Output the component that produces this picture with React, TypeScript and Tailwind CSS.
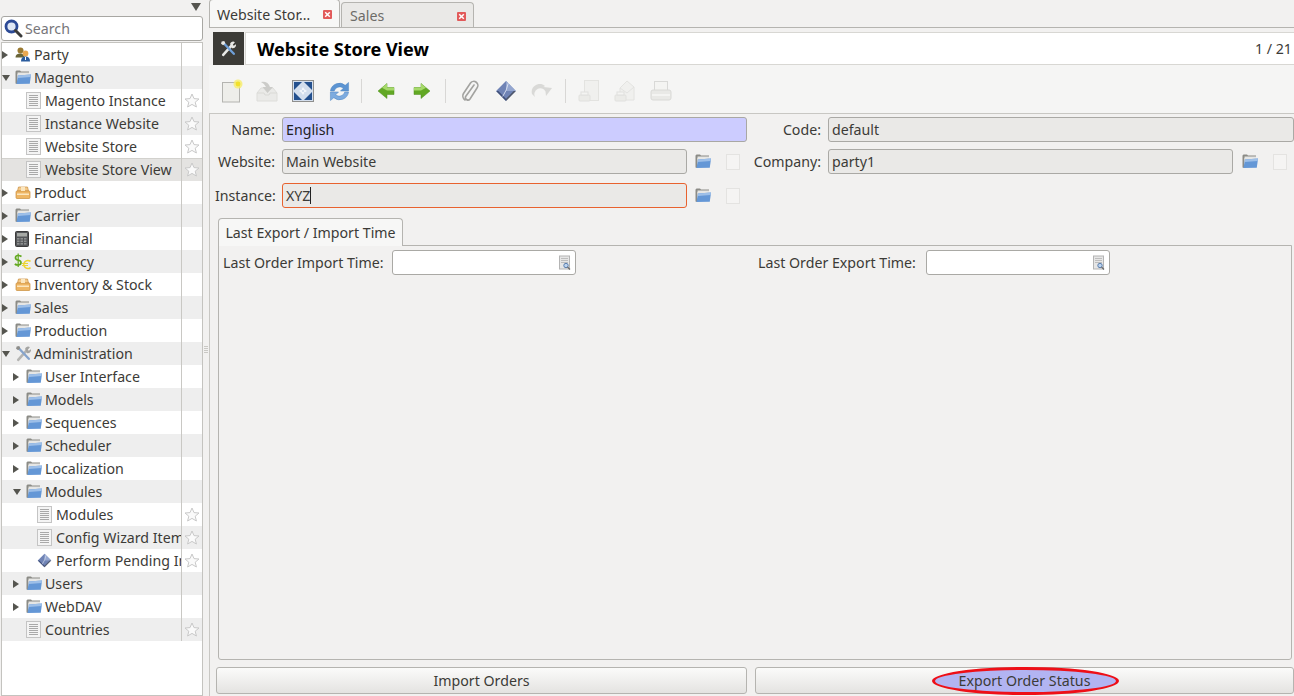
import React from "react";

const Folder = () => (
  <svg width="16" height="15" viewBox="0 0 16 15" className="shrink-0">
    <path d="M0.5 1.5 L0.5 13.5 L2 14 L2.5 4 L14 4 L14 1.5 L6 1.5 L5 0.5 L1.5 0.5 Z" fill="#8b8b86" />
    <rect x="2.5" y="2.5" width="11.5" height="3" fill="#e6e6e4" />
    <path d="M3 5.5 L16 4.5 L14.8 13.8 L1.5 14 Z" fill="#6497d6" />
    <path d="M3 5.5 L16 4.5 L15.7 7 L2.7 8 Z" fill="#9dbfe8" />
  </svg>
);

const Doc = () => (
  <svg width="15" height="17" viewBox="0 0 15 17">
    <rect x="0.5" y="0.5" width="14" height="16" fill="#f4f4f4" stroke="#c4c4c4" />
    {[3.5, 5.5, 7.5, 9.5, 11.5, 13.5].map((y) => (
      <line key={y} x1="3" x2="12" y1={y} y2={y} stroke="#a9a9a9" />
    ))}
  </svg>
);

const Star = () => (
  <svg width="16" height="15" viewBox="0 0 16 15">
    <path d="M8 1 L10 5.6 L15 6 L11.2 9.2 L12.4 14 L8 11.4 L3.6 14 L4.8 9.2 L1 6 L6 5.6 Z" fill="#fafafa" stroke="#c9c9c9" />
  </svg>
);

const Diamond = ({ size = 15 }: { size?: number }) => (
  <svg width={size} height={size} viewBox="0 0 20 20">
    <path d="M10 1 L19 10 L10 19 L1 10 Z" fill="#6f83b5" />
    <path d="M10 1 L19 10 L10 10 Z" fill="#94a6cf" />
    <path d="M1 10 L10 19 L10 17 L3 10 Z" fill="#3f4f78" />
    <path d="M10 19 L19 10 L17 10 L10 17 Z" fill="#3a3a3a" opacity="0.6" />
    <path d="M12 3 Q11 9 7 15" stroke="#dfe6f4" strokeWidth="0.8" fill="none" />
  </svg>
);

const HeaderTools = () => (
  <svg width="17" height="17" viewBox="0 0 16 16">
    <path d="M3 14 L11 5" stroke="#e8e8e6" strokeWidth="2.4" strokeLinecap="round" />
    <path d="M9.5 3.5 A3 3 0 0 1 14 2 L12 4.5 L13 5.5 L15 4 A3 3 0 0 1 11 7.5 Z" fill="#e8e8e6" />
    <path d="M4 3.5 L13 13" stroke="#6f9fd8" strokeWidth="2.2" strokeLinecap="round" />
    <path d="M1.5 1.5 L4 1 L5 3 L3 5 L1 3.5 Z" fill="#e8e8e6" />
  </svg>
);

const AdminTools = () => (
  <svg width="17" height="17" viewBox="0 0 16 16">
    <path d="M3 14 L11 5" stroke="#b4b4b2" strokeWidth="2.4" strokeLinecap="round" />
    <path d="M9.5 3.5 A3 3 0 0 1 14 2 L12 4.5 L13 5.5 L15 4 A3 3 0 0 1 11 7.5 Z" fill="#a4a4a2" />
    <path d="M4 3.5 L13 13" stroke="#86a4cc" strokeWidth="2.2" strokeLinecap="round" />
    <path d="M1.5 1.5 L4 1 L5 3 L3 5 L1 3.5 Z" fill="#8d8d8a" />
  </svg>
);

const Party = () => (
  <svg width="16" height="15" viewBox="0 0 16 15">
    <circle cx="5.5" cy="3.5" r="3" fill="#9a7a32" />
    <path d="M0.5 10.5 Q0.5 6.5 5.5 6.5 Q9 6.5 9.5 10.5 Z" fill="#6a6538" />
    <circle cx="10.5" cy="6.5" r="2.9" fill="#eaa850" />
    <path d="M6 14.5 Q6 9.5 10.5 9.5 Q15 9.5 15 14.5 Z" fill="#2a5c9e" />
    <rect x="10" y="10" width="1" height="3" fill="#fff" />
  </svg>
);

const Box = () => (
  <svg width="16" height="13" viewBox="0 0 16 13">
    <path d="M2.5 5 L3.5 1 L12.5 1 L13.5 5 Z" fill="#f4c98a" stroke="#c98e3e" strokeWidth="0.7" />
    <rect x="1" y="5" width="14" height="7.5" rx="1" fill="#eeb664" stroke="#c98e3e" strokeWidth="0.7" />
    <rect x="6" y="1" width="4" height="4" fill="#fbe6bf" />
    <rect x="2" y="7.5" width="12" height="1.5" fill="#fbe6bf" />
  </svg>
);

const Calc = () => (
  <svg width="14" height="16" viewBox="0 0 14 16">
    <rect x="0.5" y="0.5" width="13" height="15" rx="1" fill="#55575a" stroke="#3c3c3c" />
    <rect x="2" y="2" width="10" height="3.5" fill="#a7aaa6" />
    {[7, 9.5, 12].map((y) =>
      [2, 5.5, 9].map((x) => <rect key={`${x}-${y}`} x={x} y={y} width="2.5" height="1.6" fill="#8e9090" />),
    )}
  </svg>
);

const Currency = () => (
  <svg width="17" height="17" viewBox="0 0 17 17" className="ml-[-1px]">
    <path d="M7.5 3.5 Q6 2.5 4 2.5 Q1.5 2.5 1.5 4.7 Q1.5 6.5 4 7 Q7 7.7 7 9.8 Q7 12 4 12 Q2 12 0.8 11" fill="none" stroke="#62a81e" strokeWidth="1.7" />
    <path d="M4.2 0.5 L4.2 14" stroke="#62a81e" strokeWidth="1.2" />
    <path d="M16.5 8.5 A4 4 0 1 0 16.5 14.5" fill="none" stroke="#ecd530" strokeWidth="1.6" />
    <path d="M8 10.5 L14 10.5 M8 12.5 L14 12.5" stroke="#ecd530" strokeWidth="1.1" />
  </svg>
);

const Search = () => (
  <svg width="19" height="19" viewBox="0 0 19 19">
    <circle cx="7.5" cy="7.5" r="5.5" fill="#dfe7f5" stroke="#2c4a96" strokeWidth="2.8" />
    <path d="M11.5 11.5 L17 17" stroke="#3b3b3b" strokeWidth="3" strokeLinecap="round" />
  </svg>
);

const CalPick = () => (
  <svg width="14" height="16" viewBox="0 0 14 16">
    <rect x="1.5" y="1" width="10" height="13" fill="#e6e6e6" stroke="#b4b4b4" />
    {[3.5, 5.5, 7.5].map((y) => (
      <line key={y} x1="3" x2="10" y1={y} y2={y} stroke="#bdbdbd" />
    ))}
    <circle cx="8" cy="10.5" r="2.2" fill="#bcd3ee" stroke="#5b7fae" />
    <path d="M9.5 12 L12 14.5" stroke="#6b6b6b" strokeWidth="1.3" />
  </svg>
);

const Arrow = ({ dir }: { dir: "left" | "right" }) => (
  <svg width="18" height="16" viewBox="0 0 18 16">
    <g transform={dir === "right" ? "" : "translate(18 0) scale(-1 1)"}>
      <path d="M1 4.5 L8 4.5 L8 0.5 L17 8 L8 15.5 L8 11.5 L1 11.5 Z" fill="#62a824" stroke="#4f8f1c" strokeWidth="0.5" />
      <path d="M1 4.5 L8 4.5 L8 0.5 L13 4.7 L8 7.5 L1 7.5 Z" fill="#a6d96a" />
    </g>
  </svg>
);

const Icons: Record<string, React.ReactNode> = {
  new: (
    <svg width="24" height="24" viewBox="0 0 24 24">
      <rect x="3.5" y="3.5" width="17" height="19.5" fill="#eeeeea" stroke="#b4b4b0" />
      <circle cx="19" cy="5" r="4.5" fill="#f7ee6a" opacity="0.8" />
      <circle cx="19" cy="5" r="2.4" fill="#f2e02a" />
    </svg>
  ),
  save: (
    <svg width="24" height="22" viewBox="0 0 24 22" opacity="0.7">
      <path d="M2 13 L6 8 L18 8 L22 13 L22 21 L2 21 Z" fill="#e6e6e3" stroke="#d4d4d0" />
      <path d="M2 13 L9 13 L10 15 L14 15 L15 13 L22 13" fill="none" stroke="#cfcfcb" />
      <path d="M6 2 Q13 1 15 7 L18 7 L12.5 13 L7.5 7 L11 7 Q10 4 6 2 Z" fill="#bcbcb8" />
    </svg>
  ),
  full: (
    <svg width="22" height="22" viewBox="0 0 22 22">
      <rect x="0.5" y="0.5" width="21" height="21" fill="#d3deed" stroke="#8f8f8d" />
      <path d="M2 2 L10 2 L2 10 Z" fill="#23508e" />
      <path d="M20 2 L12 2 L20 10 Z" fill="#23508e" />
      <path d="M2 20 L10 20 L2 12 Z" fill="#23508e" />
      <path d="M20 20 L12 20 L20 12 Z" fill="#23508e" />
      <path d="M11 7 L9 10 L13 10 Z M11 15 L9 12 L13 12 Z M7 11 L10 9 L10 13 Z M15 11 L12 9 L12 13 Z" fill="#f4f7fb" />
    </svg>
  ),
  reload: (
    <svg width="21" height="21" viewBox="0 0 22 22">
      <path d="M1.5 10.5 A9.5 9.5 0 0 1 17 4.5 L20.5 1.5 L20.5 10.5 L12 10.5 L15 7.5 A6 6 0 0 0 5.5 10.5 Z" fill="#5c94d2" stroke="#4a82c0" strokeWidth="0.5" />
      <path d="M20.5 11.5 A9.5 9.5 0 0 1 5 17.5 L1.5 20.5 L1.5 11.5 L10 11.5 L7 14.5 A6 6 0 0 0 16.5 11.5 Z" fill="#7dabdf" stroke="#4a82c0" strokeWidth="0.5" />
    </svg>
  ),
  clip: (
    <svg width="20" height="22" viewBox="0 0 20 22">
      <path d="M14 5 L6 16 A2.4 2.4 0 0 0 10 19 L17 8 A4 4 0 0 0 10.5 3 L3.5 13.5 A5 5 0 0 0 5 20" fill="none" stroke="#a3a3a0" strokeWidth="1.6" strokeLinecap="round" />
    </svg>
  ),
  redo: (
    <svg width="22" height="18" viewBox="0 0 22 18" opacity="0.6">
      <path d="M1 12 A8 8 0 0 1 14 4 L12.5 5 L21 6 L15 14 L14.5 9.5 A5 5 0 0 0 4 15 Z" fill="#c8c8c4" />
    </svg>
  ),
  printDoc: (
    <svg width="22" height="24" viewBox="0 0 22 24" opacity="0.5">
      <rect x="6.5" y="1.5" width="14" height="20" fill="#ededea" stroke="#d2d2ce" />
      <rect x="1" y="16" width="11" height="6" rx="1" fill="#e2e2de" stroke="#cecec9" />
      <rect x="3" y="13" width="7" height="3" fill="#f4f4f2" stroke="#cecec9" />
    </svg>
  ),
  printMail: (
    <svg width="22" height="24" viewBox="0 0 22 24" opacity="0.5">
      <path d="M6 9 L13 2 L20 8 L20 21 L6 21 Z" fill="#ededea" stroke="#d2d2ce" />
      <path d="M6 9 L13 14 L20 8" fill="none" stroke="#d2d2ce" />
      <rect x="1" y="16" width="11" height="6" rx="1" fill="#e2e2de" stroke="#cecec9" />
      <rect x="3" y="13" width="7" height="3" fill="#f4f4f2" stroke="#cecec9" />
    </svg>
  ),
  print: (
    <svg width="22" height="22" viewBox="0 0 22 22" opacity="0.6">
      <rect x="4.5" y="1.5" width="13" height="9" fill="#f4f4f2" stroke="#c8c8c4" />
      <rect x="1" y="10" width="20" height="10" rx="2" fill="#e2e2de" stroke="#c8c8c4" />
      <rect x="2" y="14" width="18" height="2" fill="#f4f4f2" />
    </svg>
  ),
};

type Row = { label: string; indent: number; arrow?: "r" | "d"; icon: React.ReactNode; star?: boolean; selected?: boolean };

const rows: Row[] = [
  { label: "Party", indent: 0, arrow: "r", icon: <Party /> },
  { label: "Magento", indent: 0, arrow: "d", icon: <Folder /> },
  { label: "Magento Instance", indent: 1, icon: <Doc />, star: true },
  { label: "Instance Website", indent: 1, icon: <Doc />, star: true },
  { label: "Website Store", indent: 1, icon: <Doc />, star: true },
  { label: "Website Store View", indent: 1, icon: <Doc />, star: true, selected: true },
  { label: "Product", indent: 0, arrow: "r", icon: <Box /> },
  { label: "Carrier", indent: 0, arrow: "r", icon: <Folder /> },
  { label: "Financial", indent: 0, arrow: "r", icon: <Calc /> },
  { label: "Currency", indent: 0, arrow: "r", icon: <Currency /> },
  { label: "Inventory & Stock", indent: 0, arrow: "r", icon: <Box /> },
  { label: "Sales", indent: 0, arrow: "r", icon: <Folder /> },
  { label: "Production", indent: 0, arrow: "r", icon: <Folder /> },
  { label: "Administration", indent: 0, arrow: "d", icon: <AdminTools /> },
  { label: "User Interface", indent: 1, arrow: "r", icon: <Folder /> },
  { label: "Models", indent: 1, arrow: "r", icon: <Folder /> },
  { label: "Sequences", indent: 1, arrow: "r", icon: <Folder /> },
  { label: "Scheduler", indent: 1, arrow: "r", icon: <Folder /> },
  { label: "Localization", indent: 1, arrow: "r", icon: <Folder /> },
  { label: "Modules", indent: 1, arrow: "d", icon: <Folder /> },
  { label: "Modules", indent: 2, icon: <Doc />, star: true },
  { label: "Config Wizard Items", indent: 2, icon: <Doc />, star: true },
  { label: "Perform Pending Installation", indent: 2, icon: <Diamond />, star: true },
  { label: "Users", indent: 1, arrow: "r", icon: <Folder /> },
  { label: "WebDAV", indent: 1, arrow: "r", icon: <Folder /> },
  { label: "Countries", indent: 1, icon: <Doc />, star: true },
];

const TreeArrow = ({ dir }: { dir?: "r" | "d" }) =>
  dir === "r" ? (
    <span className="h-0 w-0 border-y-[4px] border-l-[6px] border-y-transparent border-l-[#55554f]" />
  ) : dir === "d" ? (
    <span className="h-0 w-0 border-x-[4px] border-t-[6px] border-x-transparent border-t-[#55554f]" />
  ) : null;

const Sep = ({ className }: { className: string }) => (
  <div className={`flex ${className}`}>
    <div className="h-[24px] w-px bg-[#d8d7d5]" />
  </div>
);

const Tool = ({ children }: { children: React.ReactNode }) => (
  <div className="flex h-[36px] w-[36px] items-center justify-center">{children}</div>
);

const Ghost = () => <div className="h-[16px] w-[14px] border border-[#e4e3e1] bg-[#f5f4f3]" />;

const Field = ({ value, className }: { value: string; className: string }) => (
  <div className={`flex h-[25px] items-center rounded-[3px] border px-[3px] ${className}`}>{value}</div>
);

const Label = ({ children, className }: { children: string; className: string }) => (
  <div className={`shrink-0 whitespace-nowrap text-right ${className}`}>{children}</div>
);

export default function App() {
  return (
    <div
      className="flex h-[696px] w-[1294px] overflow-hidden bg-[#f2f1f0] text-[14.2px] leading-[18px] text-[#3c3b37]"
      style={{ fontFamily: '"Noto Sans", "Open Sans", sans-serif' }}
    >
      <aside className="flex w-[203px] shrink-0 flex-col">
        <div className="flex h-[16px] items-center justify-end pr-[2px]">
          <span className="mt-[-2px] h-0 w-0 border-x-[5px] border-t-[8px] border-x-transparent border-t-[#55554f]" />
        </div>
        <div className="ml-[1px] flex h-[25px] items-center gap-[2px] rounded-[3px] border border-[#a8a7a3] bg-white pl-[2px]">
          <Search />
          <span className="text-[#77767a]">Search</span>
        </div>
        <div className="ml-[1px] mt-[1px] flex-1 overflow-hidden border border-[#c4c3bf] bg-white">
          {rows.map((r, i) => (
            <div
              key={`${r.label}${i}`}
              className={`flex h-[23px] items-center ${
                r.selected
                  ? "bg-[#e4e3e1] shadow-[inset_0_1px_0_#d2d1cd]"
                  : i % 2 === 1
                    ? "bg-[#eeeeee]"
                    : "bg-white"
              }`}
            >
              <div
                className={`flex h-full w-[179px] shrink-0 items-center overflow-hidden whitespace-nowrap ${
                  r.indent === 0 ? "pl-0" : r.indent === 1 ? "pl-[11px]" : "pl-[22px]"
                }`}
              >
                <div className="flex w-[11px] shrink-0 items-center justify-start">
                  <TreeArrow dir={r.arrow} />
                </div>
                <div className="flex w-[21px] shrink-0 items-center justify-start pl-[2px]">{r.icon}</div>
                <span>{r.label}</span>
              </div>
              <div className="flex h-full flex-1 items-center justify-center border-l border-[#c9c8c4]">
                {r.star && <Star />}
              </div>
            </div>
          ))}
        </div>
      </aside>

      <div className="flex w-[6px] shrink-0 flex-col items-center justify-center gap-px pt-[3px]">
        {[0, 1, 2, 3].map((n) => (
          <div key={n} className="h-px w-[4px] bg-[#c9c8c4]" />
        ))}
      </div>

      <main className="flex min-w-0 flex-1 flex-col">
        <div className="flex h-[28px] items-end gap-px border-b border-[#b5b4b0]">
          <div className="flex h-[28px] w-[131px] items-center justify-between rounded-t-[4px] border border-b-0 border-[#b5b4b0] bg-[#f7f7f6] pl-[7px] pr-[7px] pt-[2px]">
            <span className="whitespace-nowrap">Website Stor…</span>
            <CloseIcon />
          </div>
          <div className="flex h-[25px] w-[133px] items-center justify-between rounded-t-[4px] border border-b-0 border-[#b5b4b0] bg-[#eae9e7] pl-[8px] pr-[7px] pt-[2px] text-[#6d6c68]">
            <span>Sales</span>
            <CloseIcon />
          </div>
        </div>

        <div className="ml-[4px] mt-[4px] flex h-[33px] items-stretch">
          <div className="flex w-[31px] items-center justify-center bg-[#3c3b37]">
            <HeaderTools />
          </div>
          <div className="ml-px flex flex-1 items-center justify-between border-y border-l border-[#d8d7d3] bg-white pl-[11px] pr-[2px]">
            <span className="text-[18px] font-bold text-black">Website Store View</span>
            <span>1 / 21</span>
          </div>
        </div>

        <div className="flex h-[49px] items-center border-b border-[#c8c7c3] bg-[#f5f5f4] pl-[4px] pt-[4px]">
          <Tool>{Icons.new}</Tool>
          <Tool>{Icons.save}</Tool>
          <Tool>{Icons.full}</Tool>
          <Tool>{Icons.reload}</Tool>
          <Sep className="w-[11px] pl-[4px]" />
          <Tool><Arrow dir="left" /></Tool>
          <Tool><Arrow dir="right" /></Tool>
          <Sep className="w-[12px] pl-[5px]" />
          <Tool>{Icons.clip}</Tool>
          <Tool><Diamond size={22} /></Tool>
          <Tool>{Icons.redo}</Tool>
          <Sep className="w-[11px] pl-[5px]" />
          <Tool>{Icons.printDoc}</Tool>
          <Tool>{Icons.printMail}</Tool>
          <Tool>{Icons.print}</Tool>
        </div>

        <div className="flex flex-1 flex-col border-l border-[#c8c7c3] pl-[5px]">
          <div className="mt-[3px] flex items-center">
            <Label className="w-[60px]">Name:</Label>
            <Field value="English" className="ml-[7px] w-[465px] border-[#a9a8a4] bg-[#ccccff] text-[#22221f]" />
            <Label className="w-[74px]">Code:</Label>
            <Field value="default" className="ml-[7px] flex-1 border-[#aaa9a5] bg-[#eae9e7]" />
          </div>
          <div className="mt-[7px] flex items-center">
            <Label className="w-[60px]">Website:</Label>
            <Field value="Main Website" className="ml-[7px] w-[405px] border-[#aaa9a5] bg-[#eae9e7]" />
            <div className="ml-[8px] flex w-[47px] items-center"><Folder /><div className="ml-[15px]"><Ghost /></div></div>
            <Label className="w-[79px]">Company:</Label>
            <Field value="party1" className="ml-[7px] w-[405px] border-[#aaa9a5] bg-[#eae9e7]" />
            <div className="ml-[9px] flex items-center"><Folder /><div className="ml-[15px]"><Ghost /></div></div>
          </div>
          <div className="mt-[9px] flex items-center">
            <Label className="w-[60px]">Instance:</Label>
            <div className="ml-[7px] flex h-[25px] w-[405px] items-center rounded-[3px] border border-[#e8622f] bg-[#eae9e7] px-[3px]">
              XYZ<span className="h-[17px] w-px bg-[#222]" />
            </div>
            <div className="ml-[8px] flex w-[47px] items-center"><Folder /><div className="ml-[15px]"><Ghost /></div></div>
          </div>

          <div className="ml-[3px] mt-[10px] flex">
            <div className="z-10 mb-[-1px] flex h-[28px] w-[185px] items-center justify-center whitespace-nowrap rounded-t-[4px] border border-b-0 border-[#b5b4b0] bg-[#f7f7f6]">
              Last Export / Import Time
            </div>
          </div>
          <div className="ml-[3px] mr-[2px] flex h-[415px] items-start rounded-b-[3px] border border-[#b5b4b0] bg-[#f2f1f0] pl-[4px] pt-[4px]">
            <div className="flex items-center">
              <span className="w-[162px] whitespace-nowrap">Last Order Import Time:</span>
              <DateBox className="ml-[7px]" />
            </div>
            <div className="ml-[182px] flex items-center">
              <span className="w-[161px] whitespace-nowrap">Last Order Export Time:</span>
              <DateBox className="ml-[7px]" />
            </div>
          </div>

          <div className="mt-[7px] flex gap-[8px] pl-px pr-0">
            <Btn className="w-[531px]">Import Orders</Btn>
            <Btn className="flex-1">
              <span className="relative z-10">Export Order Status</span>
              <span className="absolute left-[176px] top-[-1px] h-[28px] w-[187px] rounded-[50%] border-[3px] border-[#ee0f17] bg-[#b2b4f2]" />
            </Btn>
          </div>
        </div>
      </main>
    </div>
  );
}

function CloseIcon() {
  return (
    <svg width="9" height="9" viewBox="0 0 9 9" className="shrink-0">
      <rect width="9" height="9" rx="1" fill="#e25a5a" />
      <path d="M2.2 2.2 L6.8 6.8 M6.8 2.2 L2.2 6.8" stroke="#fff" strokeWidth="1.5" />
    </svg>
  );
}

function DateBox({ className }: { className: string }) {
  return (
    <div className={`flex h-[25px] w-[184px] items-center justify-end rounded-[3px] border border-[#aaa9a5] bg-white pr-[3px] ${className}`}>
      <CalPick />
    </div>
  );
}

function Btn({ children, className }: { children: React.ReactNode; className: string }) {
  return (
    <div className={`relative flex h-[27px] items-center justify-center rounded-[3px] border border-[#b5b4b0] bg-gradient-to-b from-[#fbfbfa] to-[#e4e3e1] ${className}`}>
      {children}
    </div>
  );
}
